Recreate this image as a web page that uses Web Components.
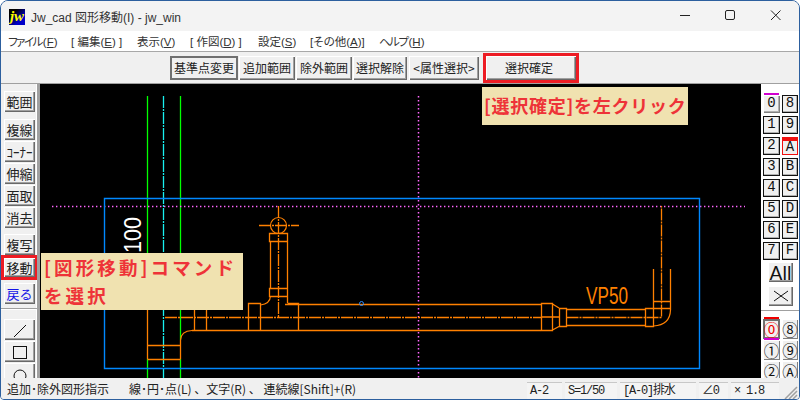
<!DOCTYPE html>
<html lang="ja"><head><meta charset="utf-8"><title>Jw_cad</title>
<style>
html,body{margin:0;padding:0;width:800px;height:400px;overflow:hidden;background:#fff}
body{font-family:"Noto Sans CJK JP","Liberation Sans",sans-serif;font-size:12px;color:#222}
</style></head><body>
<jw-app>
  <jw-titlebar slot="title">Jw_cad 図形移動(I) - jw_win</jw-titlebar>
  <jw-menu slot="menu"></jw-menu>
  <jw-toolbar slot="tools">
    <jw-btn pressed style="width:68px">基準点変更</jw-btn>
    <jw-btn style="width:56px">追加範囲</jw-btn>
    <jw-btn style="width:56px">除外範囲</jw-btn>
    <jw-btn style="width:54px">選択解除</jw-btn>
    <jw-btn style="width:70px;margin-left:1px">&lt;属性選択&gt;</jw-btn>
    <jw-btn mark style="width:90px;margin-left:6px;padding-right:4px">選択確定</jw-btn>
  </jw-toolbar>
  <jw-side slot="left"></jw-side>
  <jw-canvas slot="canvas">
    <jw-callout style="left:442px;top:3px;width:206px;height:38px;padding:0 0 0 2px;line-height:37px;letter-spacing:.75px">[選択確定]を左クリック</jw-callout>
    <jw-callout style="left:1px;top:169px;width:202px;height:57px;padding:0 0 0 3px;line-height:28px;font-size:18.5px;letter-spacing:3.1px">[図形移動]コマンド<br>を選択</jw-callout>
  </jw-canvas>
  <jw-palette slot="right"></jw-palette>
  <jw-status slot="status"></jw-status>
</jw-app>
<script>
function def(name,css,html){
  customElements.define(name,class extends HTMLElement{
    constructor(){super();const r=this.attachShadow({mode:"open"});r.innerHTML="<style>"+css+"</style>"+html;}
  });
}
def("jw-app",`:host{display:grid;box-sizing:border-box;width:800px;height:400px;border:1px solid #2c5f9e;border-radius:8px 8px 4px 4px;overflow:hidden;background:#f0f0f0;grid-template-columns:39px 721px 38px;grid-template-rows:30px 20px 33px 294px 21px}
::slotted([slot=title]),::slotted([slot=menu]),::slotted([slot=tools]),::slotted([slot=status]){grid-column:1/-1}`,
`<slot name="title"></slot><slot name="menu"></slot><slot name="tools"></slot><slot name="left"></slot><slot name="canvas"></slot><slot name="right"></slot><slot name="status"></slot>`);

def("jw-titlebar",`:host{display:flex;align-items:center;background:#f3f3f3;font:12px "Liberation Sans","Noto Sans CJK JP",sans-serif;font-feature-settings:"palt";color:#333;padding-left:8px;padding-top:1px;box-sizing:border-box}
.ico{width:16px;height:16px;background:linear-gradient(135deg,#000 25%,#0000c8 70%);color:#ff0;font:italic bold 15px/15px "Liberation Serif",serif;text-align:center;margin-right:6px;overflow:hidden;flex:none}
.t{flex:1;white-space:nowrap}
svg{flex:none;display:block;margin:0 18px 3px 0}`,
`<div class="ico">jw</div><div class="t"><slot></slot></div>
<svg width="101" height="14" viewBox="0 0 101 14" fill="none" stroke="#222" stroke-width="1">
<path d="M0 7.5H10"/>
<rect x="45.5" y="2.5" width="9" height="9" rx="1.5"/>
<path d="M91 2.5L100.5 12M100.5 2.5L91 12"/></svg>`);

def("jw-menu",`:host{display:flex;align-items:center;background:#fff;font:11.5px "Liberation Sans","Noto Sans CJK JP",sans-serif;font-feature-settings:"palt";color:#333;padding-left:7px;white-space:nowrap}
span{display:block}
i{font-style:normal;letter-spacing:-1.5px;margin-right:1px}`,
`<span style="width:63px"><i>ファイル</i>(<u>F</u>)</span><span style="width:66px">[ 編集(<u>E</u>) ]</span><span style="width:53px">表示(<u>V</u>)</span><span style="width:68px">[ 作図(<u>D</u>) ]</span><span style="width:52px">設定(<u>S</u>)</span><span style="width:69px">[その他(<u>A</u>)]</span><span><i>ヘルプ</i>(<u>H</u>)</span>`);

def("jw-toolbar",`:host{display:flex;align-items:center;background:#f0f0f0;border-top:1px solid #a8a8a8;border-bottom:1px solid #a0a0a0;box-sizing:border-box;padding-left:169px;gap:1px}`,`<slot></slot>`);

def("jw-btn",`:host{display:flex;align-items:center;justify-content:center;box-sizing:border-box;height:24px;background:#f0f0f0;font-size:12px;color:#222;white-space:nowrap;overflow:hidden;box-shadow:inset 1px 1px 0 #fff,inset -1px -1px 0 #696969,inset -2px -2px 0 #a0a0a0;flex:none}
:host([pressed]){box-shadow:inset 0 0 0 2px #707070}
:host([mark]){outline:3px solid #ed1c24;overflow:visible}
:host([blue]){color:#1414e6}`,`<slot></slot>`);

def("jw-side",`:host{display:flex;flex-direction:column;align-items:flex-start;background:#f0f0f0;border-right:3px solid #a0a0a0;box-shadow:inset -1px 0 0 #fff;box-sizing:border-box;overflow:hidden;padding:7px 0 0 3px}
jw-btn{width:31px;height:21px;font-size:13px;margin-bottom:1px}
hr{width:36px;margin:4px 0 9px -3px;border:0;border-top:1px solid #a0a0a0;border-bottom:1px solid #fff;height:0}`,
`<jw-btn>範囲</jw-btn><jw-btn style="margin-top:6px">複線</jw-btn><jw-btn>ｺｰﾅｰ</jw-btn><jw-btn>伸縮</jw-btn><jw-btn>面取</jw-btn><jw-btn>消去</jw-btn>
<jw-btn style="margin-top:5px">複写</jw-btn><jw-btn mark style="margin-top:2px;height:19px;margin-bottom:6px">移動</jw-btn><jw-btn blue style="margin-bottom:0">戻る</jw-btn><hr>
<jw-btn><svg width="16" height="16" viewBox="0 0 16 16"><path d="M2 15L14 3" stroke="#111" fill="none"/></svg></jw-btn>
<jw-btn><svg width="16" height="16" viewBox="0 0 16 16"><rect x="1.5" y="2.5" width="13" height="12" stroke="#111" fill="none"/></svg></jw-btn>
<jw-btn><svg width="16" height="16" viewBox="0 0 16 16"><circle cx="8" cy="10" r="6" stroke="#111" fill="none"/></svg></jw-btn>`);

def("jw-canvas",`:host{display:block;position:relative;background:#000;overflow:hidden}
svg{display:block}
.s{fill:none;stroke-width:1.3}
.o{stroke:#ff8000}.a{fill:none;stroke:#ff8000;stroke-width:1.2}`,
`<svg width="721" height="294" viewBox="40 84 721 294">
<g class="s">
<path stroke="#00ff00" d="M147.5 96V310M180.5 96V340M147.5 359V378M180.5 359V378"/>
<path stroke="#ff66ff" stroke-width="1.5" stroke-dasharray="1.4 2.6" d="M52 206.5H745M418.5 96V378"/>
<path stroke="#18f0f0" stroke-dasharray="12 1 2 1" d="M163.5 96V378"/>
<path stroke="#0088ff" stroke-width="1.4" d="M104.5 368.5V198.5H699.5V368.5Z"/>
<path stroke="#ff8000" d="M147.5 310V359M180.5 340V359M147.5 345.5H180.5M147.5 359.5H180.5"/>
<path class="o" d="M192 330.5H541M194.5 305V330M206.5 305V330M248.5 330V303.5H260.5V330M270.5 241V288M287.5 241V288M269.5 233.5H287.5V241.5H269.5ZM269.5 288.5H287.5V296.5H269.5ZM285 304.5H541M287.5 303.5H298.5V330M287.5 296V303"/>
<path class="o" stroke-dasharray="12 1 2 1" d="M165 317.5H541M278.5 206V317M259 225.5H299"/>
<path class="o" d="M541.5 303.5H552.5V330.5H541.5ZM541.5 317H559M552.5 304L559 308M552.5 330L559 326.5M559.5 308.5H566.5V326.5H559.5ZM566.5 309.5H645M566.5 325.5H645M645.5 308.5H653.5V326.5H645.5ZM653.5 269V326M670.5 269V310M653.5 301.5H670.5M653.5 308.5H670.5"/>
<path class="o" stroke-dasharray="12 1 2 1" d="M566.5 317.5H661.5V206"/>
</g>
<circle class="a" cx="278.5" cy="225.5" r="8"/>
<path class="a" d="M180.5 340Q181 331 192 330.5M270.5 296Q270 304 260.5 305M670.5 310Q670 325 653.5 326"/>
<circle cx="361.5" cy="303.5" r="2" fill="none" stroke="#2a8cff"/>
<text x="0" y="0" transform="translate(141,253) rotate(-90)" fill="#fff" font-family="Liberation Sans" font-size="23" textLength="36" lengthAdjust="spacingAndGlyphs">100</text>
<text x="586" y="304" fill="#ff8000" font-family="Liberation Sans" font-size="23" textLength="42" lengthAdjust="spacingAndGlyphs">VP50</text>
<text x="232" y="300" fill="#ff8000" font-family="Liberation Sans" font-size="23" textLength="11" lengthAdjust="spacingAndGlyphs">5</text>
</svg><slot></slot>`);

def("jw-callout",`:host{display:block;position:absolute;box-sizing:border-box;background:#f0e2b0;color:#ee3338;font:bold 18px "Noto Sans CJK JP",sans-serif;white-space:nowrap;overflow:hidden}`,`<slot></slot>`);

def("jw-key",`:host{display:block;box-sizing:border-box;background:#f0f0f0;position:relative;text-align:center;font:14px/17px "Liberation Mono",monospace;color:#111;box-shadow:inset 0 0 0 1px #111,inset -2px -2px 0 #b0b0b0}
:host([sel]){box-shadow:inset 1px 1px 0 #fff,inset -1px -1px 0 #808080,inset -2px -2px 0 #b0b0b0}
:host([act]){box-shadow:inset 0 0 0 1px #f00f0f;border-top:3px solid #f00f0f;line-height:14px}
:host([lay]){box-shadow:inset 1px 1px 0 #fff,inset -1px -1px 0 #808080;font:15.5px/20px "Noto Sans CJK JP",sans-serif}
:host([on]){box-shadow:inset 0 0 0 2px #707070;color:#f00000}
.m{position:absolute;left:1px;right:1px;top:-2px;height:2px;background:var(--m,transparent)}`,`<div class="m"></div><slot></slot>`);

def("jw-palette",`:host{display:block;background:#fff;box-sizing:border-box;padding:11px 0 0 2px;overflow:hidden}
.g{display:grid;grid-template-columns:17px 16px;column-gap:2px;grid-auto-rows:18px;row-gap:3px}
.l{display:grid;grid-template-columns:17px 16px;column-gap:2px;grid-auto-rows:20px;row-gap:1px;margin-top:8px}
jw-btn{width:25px;height:20px;margin:0 0 4px 5px}
hr{margin:0 0 0 -2px;border:0;border-top:1px solid #a0a0a0;height:0}`,
`<div class="g"><jw-key sel style="--m:#d000d0">0</jw-key><jw-key>8</jw-key><jw-key>1</jw-key><jw-key>9</jw-key><jw-key>2</jw-key><jw-key act>A</jw-key><jw-key>3</jw-key><jw-key>B</jw-key><jw-key>4</jw-key><jw-key>C</jw-key><jw-key>5</jw-key><jw-key>D</jw-key><jw-key>6</jw-key><jw-key>E</jw-key><jw-key>7</jw-key><jw-key>F</jw-key></div>
<jw-btn style="margin-top:2px;font:400 19px 'Lato','Liberation Sans',sans-serif;color:#111">All</jw-btn>
<jw-btn><svg width="18" height="12" viewBox="0 0 18 12"><path d="M2 1L16 11M16 1L2 11" stroke="#111" fill="none"/></svg></jw-btn>
<hr>
<div class="l"><jw-key lay on style="--m:#f00000">⓪</jw-key><jw-key lay>⑧</jw-key><jw-key lay style="--m:#d000d0">①</jw-key><jw-key lay>⑨</jw-key><jw-key lay>②</jw-key><jw-key lay>Ⓐ</jw-key></div>`);

def("jw-status",`:host{display:flex;align-items:center;background:#f0f0f0;font-size:12px;color:#222;white-space:nowrap;box-sizing:border-box;padding-left:6px;overflow:hidden}
.a{width:122px}.b{flex:1}
.c{box-sizing:border-box;height:17px;margin:3px 2px 0 1px;line-height:17px;padding-left:3px;background:#f4f4f4;border-top:1px solid #c8c8c8;font-family:"Liberation Mono","Noto Sans CJK JP",monospace;letter-spacing:-1.2px;overflow:hidden;flex:none}
svg{display:block;flex:none;margin-top:4px}`,
`<span class="a">追加･除外図形指示</span><span class="b">線･円･点(L) 、文字(R) 、 連続線[Shift]+(R)</span>
<span class="c" style="width:35px">A-2</span><span class="c" style="width:52px">S=1/50</span><span class="c" style="width:76px">[A-0]排水</span><span class="c" style="width:29px">∠0</span><span class="c" style="width:48px;margin-right:0">× 1.8</span>
<svg width="20" height="17" viewBox="0 0 20 17"><path d="M18 5L6 17M18 9L10 17M18 13L14 17" stroke="#a0a0a0" stroke-width="1.5" fill="none"/></svg>`);
</script>
</body></html>
